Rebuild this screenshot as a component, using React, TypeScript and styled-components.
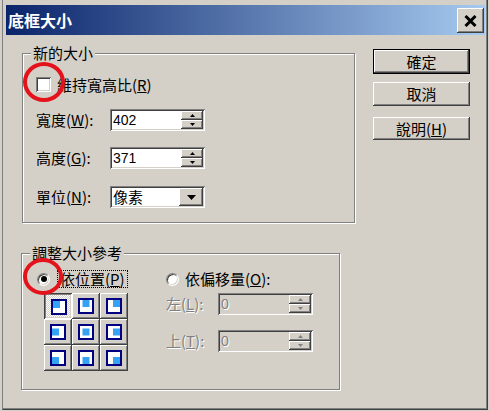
import React from "react";
import styled, { createGlobalStyle, css } from "styled-components";

const GlobalStyle = createGlobalStyle`
  html, body { margin: 0; padding: 0; background: #d4d0c8; }
  body { font-family: "Noto Sans CJK TC", "Noto Sans CJK SC", "Liberation Sans", sans-serif; }
  * { box-sizing: border-box; }
`;

const raised = css`
  box-shadow: inset -1px -1px #404040, inset 1px 1px #ffffff, inset -2px -2px #808080, inset 2px 2px #d4d0c8;
`;
const sunken = css`
  box-shadow: inset 1px 1px #808080, inset -1px -1px #ffffff, inset 2px 2px #404040, inset -2px -2px #d4d0c8;
`;

const Window = styled.div`
  width: 489px;
  height: 411px;
  background: #d4d0c8;
  position: relative;
  overflow: hidden;
`;

const Frame = styled.div`
  margin-left: 2px;
  width: 486px;
  height: 410px;
  border-left: 1px solid #808080;
  border-right: 1px solid #404040;
  border-bottom: 1px solid #404040;
  box-shadow: inset -1px -1px #808080;
  padding-top: 5px;
  display: flex;
  flex-direction: column;
`;

const TitleBar = styled.div`
  margin: 0 2px 0 3px;
  height: 30px;
  background: linear-gradient(to right, #0a246a, #a6caf0);
  display: flex;
  align-items: center;
  justify-content: space-between;
  padding: 0 1px 0 2px;
`;

const TitleText = styled.span`
  color: #ffffff;
  font-weight: bold;
  font-size: 16px;
  line-height: 18px;
`;

const CloseButton = styled.div`
  width: 27px;
  height: 25px;
  margin-top: 1px;
  background: #d4d0c8;
  ${raised};
  display: flex;
  align-items: center;
  justify-content: center;
`;

const Body = styled.div`
  display: flex;
  align-items: flex-start;
`;

const LeftCol = styled.div`
  margin-left: 19px;
  margin-top: 18px;
  display: flex;
  flex-direction: column;
`;

const GroupBox = styled.div<{ $w: number; $h: number; $ml?: number; $mt?: number }>`
  position: relative;
  width: ${(p) => p.$w}px;
  height: ${(p) => p.$h}px;
  margin-left: ${(p) => p.$ml ?? 0}px;
  margin-top: ${(p) => p.$mt ?? 0}px;
  border: 1px solid #808080;
  box-shadow: 1px 1px 0 #ffffff, inset 1px 1px 0 #ffffff;
`;

const Legend = styled.span`
  position: absolute;
  top: -9px;
  left: 8px;
  padding: 0 2px;
  background: #d4d0c8;
  font-size: 15px;
  line-height: 16px;
  color: #000;
`;

const Group1Inner = styled.div`
  padding: 23px 0 0 13px;
  display: flex;
  flex-direction: column;
`;

const CheckRow = styled.div`
  display: flex;
  align-items: center;
  height: 15px;
`;

const CheckBox = styled.div`
  width: 15px;
  height: 15px;
  background: #ffffff;
  ${sunken};
`;

const Label = styled.span<{ $disabled?: boolean; $w?: number; $ml?: number }>`
  font-size: 15px;
  line-height: 16px;
  white-space: nowrap;
  color: ${(p) => (p.$disabled ? "#808080" : "#000000")};
  text-shadow: ${(p) => (p.$disabled ? "1px 1px 0 #ffffff" : "none")};
  width: ${(p) => (p.$w ? `${p.$w}px` : "auto")};
  margin-left: ${(p) => p.$ml ?? 0}px;
  flex-shrink: 0;
`;

const U = styled.span`
  text-decoration: underline;
  text-underline-offset: 1px;
`;

const FieldRow = styled.div<{ $mt: number }>`
  display: flex;
  align-items: center;
  height: 22px;
  margin-top: ${(p) => p.$mt}px;
`;

const FieldBox = styled.div<{ $disabled?: boolean }>`
  width: 95px;
  height: 22px;
  padding: 2px;
  background: ${(p) => (p.$disabled ? "#d4d0c8" : "#ffffff")};
  ${sunken};
  display: flex;
  align-items: stretch;
`;

const FieldValue = styled.span<{ $disabled?: boolean; $cjk?: boolean }>`
  flex: 1;
  padding-left: 1px;
  font-family: ${(p) => (p.$cjk ? `"Noto Sans CJK TC", sans-serif` : `"Liberation Sans", Arial, sans-serif`)};
  font-size: ${(p) => (p.$cjk ? 15 : 14)}px;
  line-height: 18px;
  color: ${(p) => (p.$disabled ? "#808080" : "#000000")};
  text-shadow: ${(p) => (p.$disabled ? "1px 1px 0 #ffffff" : "none")};
`;

const SpinCol = styled.div`
  width: 22px;
  display: flex;
  flex-direction: column;
`;

const SpinBtn = styled.div`
  flex: 1;
  background: #d4d0c8;
  ${raised};
  display: flex;
  align-items: center;
  justify-content: center;
`;

const DropBtn = styled.div`
  width: 24px;
  background: #d4d0c8;
  ${raised};
  display: flex;
  align-items: center;
  justify-content: center;
`;

const Group2Inner = styled.div`
  padding: 16px 0 0 15px;
  display: flex;
`;

const LeftPart = styled.div`
  width: 129px;
  display: flex;
  flex-direction: column;
`;

const RightPart = styled.div`
  display: flex;
  flex-direction: column;
`;

const RadioRow = styled.div`
  display: flex;
  align-items: center;
  height: 18px;
`;

const Radio = styled.div<{ $checked?: boolean }>`
  width: 13px;
  height: 13px;
  border-radius: 50%;
  background: #ffffff;
  border: 1px solid;
  border-color: #808080 #ffffff #ffffff #808080;
  box-shadow: inset 1px 1px 0 #404040, inset -1px -1px 0 #d4d0c8;
  display: flex;
  align-items: center;
  justify-content: center;
  flex-shrink: 0;
  &::after {
    content: "";
    width: 6px;
    height: 6px;
    border-radius: 50%;
    background: ${(p) => (p.$checked ? "#000000" : "transparent")};
  }
`;

const FocusLabel = styled.span`
  margin-left: 7px;
  padding: 0 2px;
  border: 1px dotted #000000;
  font-size: 15px;
  line-height: 16px;
  white-space: nowrap;
`;

const AnchorGrid = styled.div`
  margin-top: 5px;
  margin-left: 7px;
  display: grid;
  grid-template-columns: repeat(3, 28px);
  grid-auto-rows: 26px;
`;

const AnchorBtn = styled.div<{ $pressed?: boolean }>`
  display: flex;
  align-items: center;
  justify-content: center;
  ${(p) =>
    p.$pressed
      ? css`
          background: repeating-conic-gradient(#ffffff 0 25%, #d4d0c8 0 50%) 0 0 / 2px 2px;
          box-shadow: inset 1px 1px #404040, inset -1px -1px #ffffff, inset 2px 2px #808080, inset -2px -2px #d4d0c8;
          padding: 1px 0 0 1px;
        `
      : css`
          background: #d4d0c8;
          ${raised};
        `}
`;

const RightCol = styled.div`
  margin-left: 18px;
  margin-top: 14px;
  display: flex;
  flex-direction: column;
`;

const Button = styled.div<{ $default?: boolean; $mt?: number; $h: number }>`
  width: 97px;
  height: ${(p) => p.$h}px;
  margin-top: ${(p) => p.$mt ?? 0}px;
  background: #d4d0c8;
  display: flex;
  align-items: center;
  justify-content: center;
  font-size: 15px;
  line-height: 16px;
  color: #000;
  ${(p) =>
    p.$default
      ? css`
          border: 1px solid #000000;
          ${raised};
        `
      : raised}
`;

const Annotation = styled.div<{ $l: number; $t: number; $w: number; $h: number }>`
  position: absolute;
  left: ${(p) => p.$l}px;
  top: ${(p) => p.$t}px;
  width: ${(p) => p.$w}px;
  height: ${(p) => p.$h}px;
  border: 4px solid #e4121b;
  border-radius: 50%;
  pointer-events: none;
`;

const Arrow = ({ dir, color = "#000", w = 5 }: { dir: "up" | "down"; color?: string; w?: number }) => {
  const h = Math.ceil(w / 2);
  return (
    <svg width={w} height={h} viewBox={`0 0 ${w} ${h}`}>
      {dir === "up" ? (
        <polygon points={`${w / 2},0 ${w},${h} 0,${h}`} fill={color} />
      ) : (
        <polygon points={`0,0 ${w},0 ${w / 2},${h}`} fill={color} />
      )}
    </svg>
  );
};

const Spinner = ({ disabled }: { disabled?: boolean }) => (
  <SpinCol>
    <SpinBtn>
      <Arrow dir="up" w={5} color={disabled ? "#808080" : "#000"} />
    </SpinBtn>
    <SpinBtn>
      <Arrow dir="down" w={5} color={disabled ? "#808080" : "#000"} />
    </SpinBtn>
  </SpinCol>
);

const AnchorIcon = ({ r, c }: { r: number; c: number }) => {
  const off = [2, 4.5, 7];
  return (
    <svg width="16" height="16" viewBox="0 0 16 16">
      <rect x="1" y="1" width="14" height="14" fill="#ffffff" stroke="#000080" strokeWidth="2" />
      <rect x={off[c]} y={off[r]} width="7" height="7" fill="#35a2f4" />
    </svg>
  );
};

export default function App() {
  const cells = [0, 1, 2, 3, 4, 5, 6, 7, 8];
  return (
    <>
      <GlobalStyle />
      <Window>
        <Frame>
          <TitleBar>
            <TitleText>底框大小</TitleText>
            <CloseButton>
              <svg width="13" height="12" viewBox="0 0 13 12">
                <path d="M1.5 1 L11.5 11 M11.5 1 L1.5 11" stroke="#000" strokeWidth="3" />
              </svg>
            </CloseButton>
          </TitleBar>
          <Body>
            <LeftCol>
              <GroupBox $w={333} $h={170}>
                <Legend>新的大小</Legend>
                <Group1Inner>
                  <CheckRow>
                    <CheckBox />
                    <Label $ml={6}>
                      維持寬高比(<U>R</U>)
                    </Label>
                  </CheckRow>
                  <FieldRow $mt={17}>
                    <Label $w={74}>
                      寬度(<U>W</U>):
                    </Label>
                    <FieldBox>
                      <FieldValue>402</FieldValue>
                      <Spinner />
                    </FieldBox>
                  </FieldRow>
                  <FieldRow $mt={16}>
                    <Label $w={74}>
                      高度(<U>G</U>):
                    </Label>
                    <FieldBox>
                      <FieldValue>371</FieldValue>
                      <Spinner />
                    </FieldBox>
                  </FieldRow>
                  <FieldRow $mt={17}>
                    <Label $w={74}>
                      單位(<U>N</U>):
                    </Label>
                    <FieldBox>
                      <FieldValue $cjk>像素</FieldValue>
                      <DropBtn>
                        <Arrow dir="down" w={9} />
                      </DropBtn>
                    </FieldBox>
                  </FieldRow>
                </Group1Inner>
              </GroupBox>
              <GroupBox $w={319} $h={137} $ml={-1} $mt={30}>
                <Legend>調整大小參考</Legend>
                <Group2Inner>
                  <LeftPart>
                    <RadioRow>
                      <Radio $checked />
                      <FocusLabel>
                        依位置(<U>P</U>)
                      </FocusLabel>
                    </RadioRow>
                    <AnchorGrid>
                      {cells.map((i) => (
                        <AnchorBtn key={i} $pressed={i === 0}>
                          <AnchorIcon r={Math.floor(i / 3)} c={i % 3} />
                        </AnchorBtn>
                      ))}
                    </AnchorGrid>
                  </LeftPart>
                  <RightPart>
                    <RadioRow>
                      <Radio />
                      <Label $ml={6}>
                        依偏移量(<U>O</U>):
                      </Label>
                    </RadioRow>
                    <FieldRow $mt={5}>
                      <Label $w={52} $disabled>
                        左(<U>L</U>):
                      </Label>
                      <FieldBox $disabled>
                        <FieldValue $disabled>0</FieldValue>
                        <Spinner disabled />
                      </FieldBox>
                    </FieldRow>
                    <FieldRow $mt={15}>
                      <Label $w={52} $disabled>
                        上(<U>T</U>):
                      </Label>
                      <FieldBox $disabled>
                        <FieldValue $disabled>0</FieldValue>
                        <Spinner disabled />
                      </FieldBox>
                    </FieldRow>
                  </RightPart>
                </Group2Inner>
              </GroupBox>
            </LeftCol>
            <RightCol>
              <Button $default $h={25}>確定</Button>
              <Button $mt={8} $h={24}>取消</Button>
              <Button $mt={11} $h={23}>
                說明(<U>H</U>)
              </Button>
            </RightCol>
          </Body>
        </Frame>
        <Annotation $l={23} $t={62} $w={42} $h={40} />
        <Annotation $l={23} $t={258} $w={40} $h={37} />
      </Window>
    </>
  );
}
